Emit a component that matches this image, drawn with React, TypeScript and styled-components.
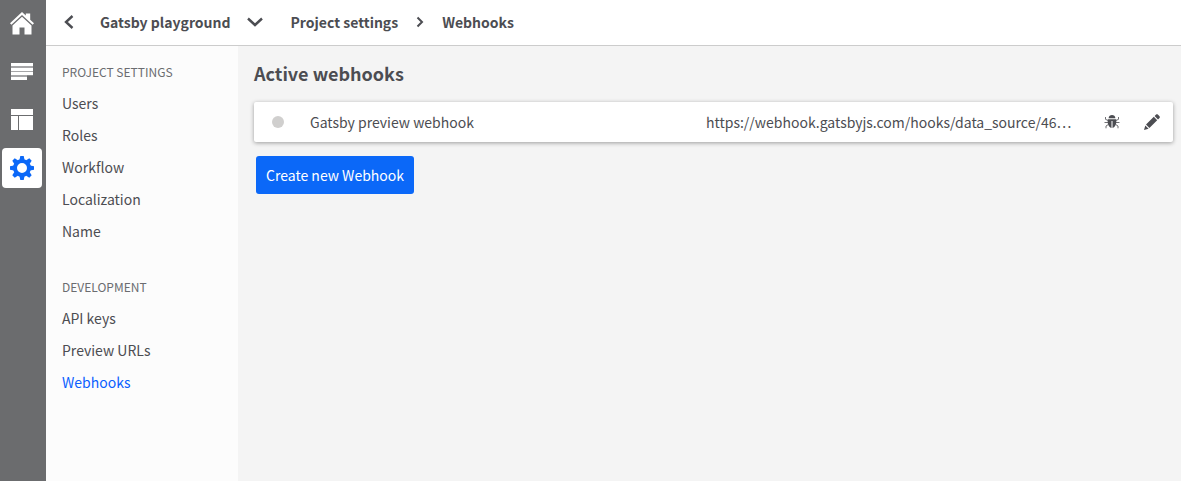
import React from "react";
import styled, { createGlobalStyle } from "styled-components";

const GlobalStyle = createGlobalStyle`
  *, *::before, *::after { box-sizing: border-box; }
  body {
    margin: 0;
    background: #f4f4f4;
    color: #4c4d52;
    font-family: "Noto Sans CJK KR", "Noto Sans", sans-serif;
    font-size: 14px;
    line-height: 24px;
  }
  a { color: inherit; text-decoration: none; }
  ul { list-style: none; margin: 0; padding: 0; }
  button { font: inherit; border: 0; cursor: pointer; }
  svg { display: block; }
`;

const Page = styled.div`
  display: flex;
  min-height: 100vh;
`;

const Rail = styled.nav`
  flex: none;
  display: flex;
  flex-direction: column;
  gap: 8px;
  width: 46px;
  padding: 4px 4px 0 2px;
  background: #6b6c6e;
`;

const RailLink = styled.a<{ $active?: boolean }>`
  display: flex;
  align-items: center;
  justify-content: center;
  width: 40px;
  height: 40px;
  border-radius: 4px;
  color: ${(p) => (p.$active ? "#0b68f8" : "#fff")};
  background: ${(p) => (p.$active ? "#fff" : "transparent")};
`;

const Workspace = styled.div`
  flex: 1;
  min-width: 0;
  display: flex;
  flex-direction: column;
`;

const Header = styled.header`
  display: flex;
  align-items: center;
  height: 46px;
  padding: 0 16px 1px;
  background: #fff;
  border-bottom: 1px solid #ccc;
  font-weight: 700;
`;

const IconButton = styled.button<{ $width: number }>`
  display: flex;
  flex: none;
  align-items: center;
  justify-content: center;
  width: ${(p) => p.$width}px;
  height: 32px;
  padding: 0;
  background: transparent;
  color: #4c4d52;
`;

const ProjectName = styled.span`
  margin: 0 14px 0 24px;
`;

const Crumbs = styled.nav`
  display: flex;
  align-items: center;
  gap: 18px;
  margin-left: 26px;
`;

const Body = styled.div`
  flex: 1;
  display: flex;
`;

const Sidebar = styled.nav`
  flex: none;
  display: flex;
  flex-direction: column;
  gap: 28px;
  width: 192px;
  padding: 14px 16px;
  background: #fcfcfc;
`;

const GroupTitle = styled.h2`
  margin: 0 0 3px;
  color: #6b6c70;
  font-size: 12px;
  font-weight: 400;
  line-height: 24px;
  text-transform: uppercase;
`;

const SideLink = styled.a<{ $active?: boolean }>`
  display: block;
  line-height: 32px;
  color: ${(p) => (p.$active ? "#0b5fff" : "inherit")};
`;

const Main = styled.main`
  flex: 1;
  min-width: 0;
  padding: 15px 8px 16px 16px;
`;

const Title = styled.h1`
  margin: 0 0 17px;
  font-size: 18px;
  font-weight: 700;
  line-height: 24px;
`;

const HookRow = styled.li`
  display: flex;
  align-items: center;
  height: 40px;
  padding: 0 1px 0 18px;
  background: #fff;
  border-radius: 2px;
  box-shadow: 0 1px 4px rgba(0, 0, 0, 0.36);
`;

const StatusDot = styled.span`
  flex: none;
  width: 12px;
  height: 12px;
  margin-right: 26px;
  border-radius: 50%;
  background: #d0cfce;
`;

const HookName = styled.span`
  flex: 1;
`;

const HookUrl = styled.span`
  flex: 0 1 386px;
  min-width: 0;
  white-space: nowrap;
`;

const PrimaryButton = styled.button`
  height: 38px;
  margin: 14px 2px 0;
  padding: 0 10px;
  border-radius: 3px;
  background: #0b68f8;
  color: #fff;
`;

const HomeIcon = () => (
  <svg width="24" height="24" viewBox="0 0 24 24" fill="currentColor" aria-hidden="true">
    <path d="M12 0 15.8 3.500V1.500h4.400v6.200L24 11.300l-1.400 1.500L12 3 1.400 12.800 0 11.300z" />
    <path d="M12 4.800 21.500 13.500V22.500H14.500V15.500H9.500V22.500H2.500V13.500z" />
  </svg>
);

const TextIcon = () => (
  <svg width="22" height="18" viewBox="0 0 22 18" fill="currentColor" aria-hidden="true">
    <path d="M0 0h22v3H0zM0 5h22v3H0zM0 9h22v3H0zM0 14h16v3H0z" />
    <path d="M0 0h22v12.500h-6V17H0z" opacity=".4" />
  </svg>
);

const LayoutIcon = () => (
  <svg width="22" height="22" viewBox="0 0 22 22" fill="currentColor" aria-hidden="true">
    <path d="M0 0h22v6H0zM0 7h7v14H0zM8 7h14v14H8z" />
  </svg>
);

const teeth = [0, 45, 90, 135, 180, 225, 270, 315];

const GearIcon = () => (
  <svg width="24" height="24" viewBox="0 0 24 24" fill="currentColor" aria-hidden="true">
    <circle cx="12" cy="12" r="7" fill="none" stroke="currentColor" strokeWidth="4" />
    {teeth.map((angle) => (
      <path key={angle} d="M9.400 4 10.300 0h3.400l.9 4z" transform={`rotate(${angle} 12 12)`} />
    ))}
  </svg>
);

type ChevronProps = { width: number; height: number; points: string; stroke?: number };

const Chevron = ({ width, height, points, stroke = 2 }: ChevronProps) => (
  <svg width={width} height={height} viewBox={`0 0 ${width} ${height}`} fill="none" stroke="currentColor" strokeWidth={stroke} aria-hidden="true">
    <polyline points={points} />
  </svg>
);

const BugIcon = () => (
  <svg width="16" height="16" viewBox="0 0 16 16" aria-hidden="true">
    <path d="M4.600 4.200C4.800 2.200 6.200 1 8 1s3.200 1.200 3.400 3.200z" fill="currentColor" />
    <path d="M3.800 5.200h8.400c.5 4-.4 7.600-3.700 8.800V7h-1v7C4.200 12.800 3.300 9.200 3.800 5.200z" fill="currentColor" />
    <path d="M4 6.500 1.500 5.300V3M4 8.500H.5M4.300 10.500 2 12v2.300M12 6.500l2.500-1.200V3M12 8.500h3.500M11.700 10.500 14 12v2.300" fill="none" stroke="currentColor" strokeWidth=".8" />
  </svg>
);

const PencilIcon = () => (
  <svg width="16" height="16" viewBox="0 0 16 16" fill="currentColor" aria-hidden="true">
    <path d="M0 16l1.300-4.600 3.300 3.300zM2 10.600l7.800-7.800 3.400 3.400L5.400 14zM10.600 2l1.500-1.500c.5-.5 1.200-.5 1.700 0l1.700 1.700c.5.5.5 1.200 0 1.700L14 5.400z" />
  </svg>
);

const groups = [
  { title: "Project settings", items: ["Users", "Roles", "Workflow", "Localization", "Name"] },
  { title: "Development", items: ["API keys", "Preview URLs", "Webhooks"] },
];

export default function App() {
  return (
    <>
      <GlobalStyle />
      <Page>
        <Rail aria-label="Main">
          <RailLink href="#home" aria-label="Home"><HomeIcon /></RailLink>
          <RailLink href="#content" aria-label="Content"><TextIcon /></RailLink>
          <RailLink href="#models" aria-label="Content models"><LayoutIcon /></RailLink>
          <RailLink href="#settings" aria-label="Settings" $active><GearIcon /></RailLink>
        </Rail>
        <Workspace>
          <Header>
            <IconButton $width={14} aria-label="Back">
              <Chevron width={10} height={14} points="8.500,1 2,7 8.500,13" stroke={2.4} />
            </IconButton>
            <ProjectName>Gatsby playground</ProjectName>
            <IconButton $width={20} aria-label="Switch project">
              <Chevron width={16} height={10} points="1,1.500 8,8 15,1.500" stroke={2.4} />
            </IconButton>
            <Crumbs aria-label="Breadcrumb">
              <a href="#settings">Project settings</a>
              <Chevron width={8} height={12} points="1.500,1.500 6,6 1.500,10.500" />
              <a href="#webhooks">Webhooks</a>
            </Crumbs>
          </Header>
          <Body>
            <Sidebar aria-label="Settings">
              {groups.map((group) => (
                <section key={group.title}>
                  <GroupTitle>{group.title}</GroupTitle>
                  <ul>
                    {group.items.map((item) => (
                      <li key={item}>
                        <SideLink href="#section" $active={item === "Webhooks"}>{item}</SideLink>
                      </li>
                    ))}
                  </ul>
                </section>
              ))}
            </Sidebar>
            <Main>
              <Title>Active webhooks</Title>
              <ul>
                <HookRow>
                  <StatusDot />
                  <HookName>Gatsby preview webhook</HookName>
                  <HookUrl>https://webhook.gatsbyjs.com/hooks/data_source/46…</HookUrl>
                  <IconButton $width={40} aria-label="Debug webhook"><BugIcon /></IconButton>
                  <IconButton $width={40} aria-label="Edit webhook"><PencilIcon /></IconButton>
                </HookRow>
              </ul>
              <PrimaryButton>Create new Webhook</PrimaryButton>
            </Main>
          </Body>
        </Workspace>
      </Page>
    </>
  );
}
